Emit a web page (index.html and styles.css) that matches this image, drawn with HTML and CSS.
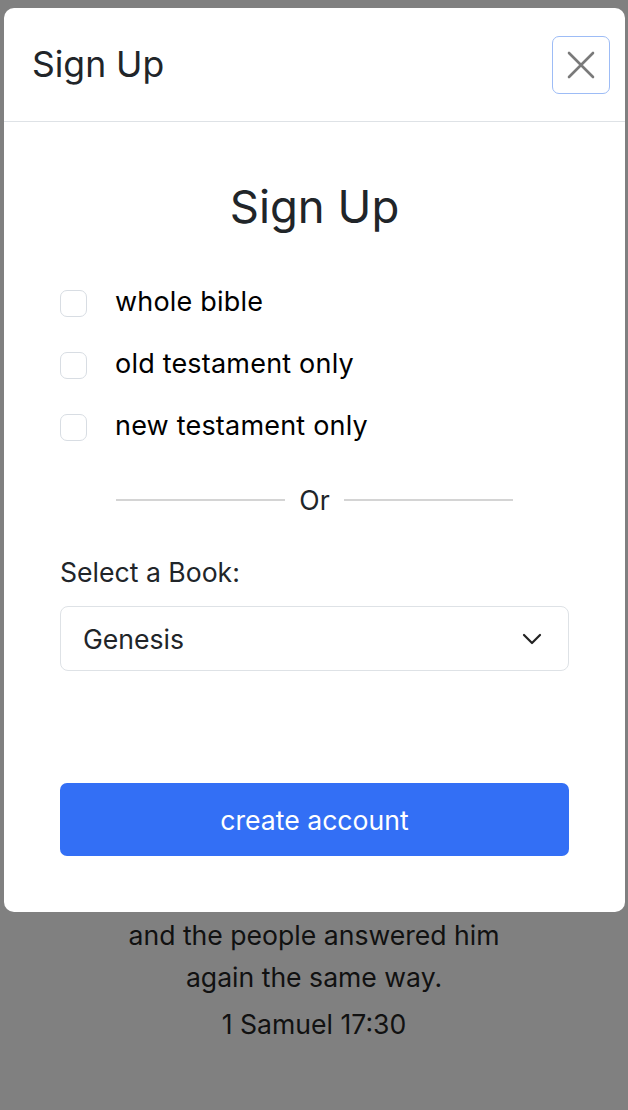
FILE: index.html
```html
<!DOCTYPE html>
<html lang="en">
<head>
<meta charset="utf-8">
<title>Sign Up</title>
<link rel="stylesheet" href="styles.css">
</head>
<body>
<div class="modal">
  <div class="modal-header">
    <h1 class="modal-title">Sign Up</h1>
    <button class="close-btn" aria-label="Close">
      <svg width="30" height="30" viewBox="0 0 30 30"><path d="M3 3 L27 27 M27 3 L3 27" stroke="#7a7a7a" stroke-width="2.6" stroke-linecap="round" fill="none"/></svg>
    </button>
  </div>
  <div class="modal-body">
    <h2 class="form-title">Sign Up</h2>
    <div class="options">
      <label class="option"><span class="box"></span><span>whole bible</span></label>
      <label class="option"><span class="box"></span><span>old testament only</span></label>
      <label class="option"><span class="box"></span><span>new testament only</span></label>
    </div>
    <div class="divider"><span class="line"></span><span class="or">Or</span><span class="line"></span></div>
    <div class="field-label">Select a Book:</div>
    <div class="select">
      <span>Genesis</span>
      <svg width="20" height="12" viewBox="0 0 20 12"><path d="M2 2 L10 10 L18 2" stroke="#222" stroke-width="2.2" fill="none" stroke-linecap="round" stroke-linejoin="round"/></svg>
    </div>
    <button class="create-btn">create account</button>
  </div>
</div>
<div class="verse">
  <p>and the people answered him<br>again the same way.</p>
  <p class="ref">1 Samuel 17:30</p>
</div>
</body>
</html>
```

FILE: styles.css
```css
* { box-sizing: border-box; }
html, body { margin: 0; padding: 0; }
body {
  background: #808080;
  font-family: Inter, "Noto Sans", sans-serif;
  color: #212529;
  width: 628px;
  height: 1110px;
  overflow: hidden;
}
.modal {
  margin: 8px 3px 0 4px;
  background: #fff;
  border-radius: 10px;
  overflow: hidden;
}
.modal-header {
  height: 114px;
  display: flex;
  align-items: center;
  justify-content: space-between;
  padding: 0 15px 0 28px;
  border-bottom: 1px solid #dee2e6;
}
.modal-title {
  margin: 0;
  font-size: 35.5px;
  font-weight: 400;
  line-height: 44px;
  color: #212529;
}
.close-btn {
  width: 58px;
  height: 58px;
  border: 1.5px solid #9dbcf6;
  border-radius: 7px;
  background: #fff;
  display: flex;
  align-items: center;
  justify-content: center;
  padding: 0;
}
.modal-body {
  padding: 50px 56px 56px;
  display: flex;
  flex-direction: column;
}
.form-title {
  margin: 0 0 40px;
  text-align: center;
  font-size: 45.5px;
  font-weight: 400;
  line-height: 70px;
  color: #212529;
}
.options {
  display: flex;
  flex-direction: column;
  gap: 22px;
}
.option {
  display: flex;
  align-items: center;
  gap: 28px;
  font-size: 27px;
  letter-spacing: 0.2px;
  line-height: 40px;
  color: #000;
}
.box {
  width: 27px;
  height: 27px;
  border: 1px solid #d8dde3;
  border-radius: 7px;
  background: #fff;
  flex: none;
  margin-top: 2px;
}
.divider {
  display: flex;
  align-items: center;
  gap: 14px;
  margin: 34px 56px 0;
  font-size: 26.6px;
  line-height: 40px;
}
.line {
  flex: 1;
  height: 2px;
  background: #d4d4d4;
}
.or { color: #212529; }
.field-label {
  margin-top: 32px;
  font-size: 26.6px;
  line-height: 40px;
  color: #212529;
}
.select {
  margin-top: 14px;
  height: 65px;
  border: 1.5px solid #dee2e6;
  border-radius: 8px;
  display: flex;
  align-items: center;
  justify-content: space-between;
  padding: 0 26px 0 22px;
  font-size: 26.6px;
  color: #212529;
}
.create-btn {
  margin-top: 112px;
  height: 73px;
  border: none;
  border-radius: 7px;
  background: #336ff5;
  color: #fff;
  font-family: Inter, "Noto Sans", sans-serif;
  font-size: 26.6px;
}
.verse {
  text-align: center;
  font-size: 26.6px;
  color: #111;
  padding-top: 2px;
}
.verse p {
  margin: 0;
  line-height: 42px;
}
.verse .ref {
  margin-top: 5px;
}
```
